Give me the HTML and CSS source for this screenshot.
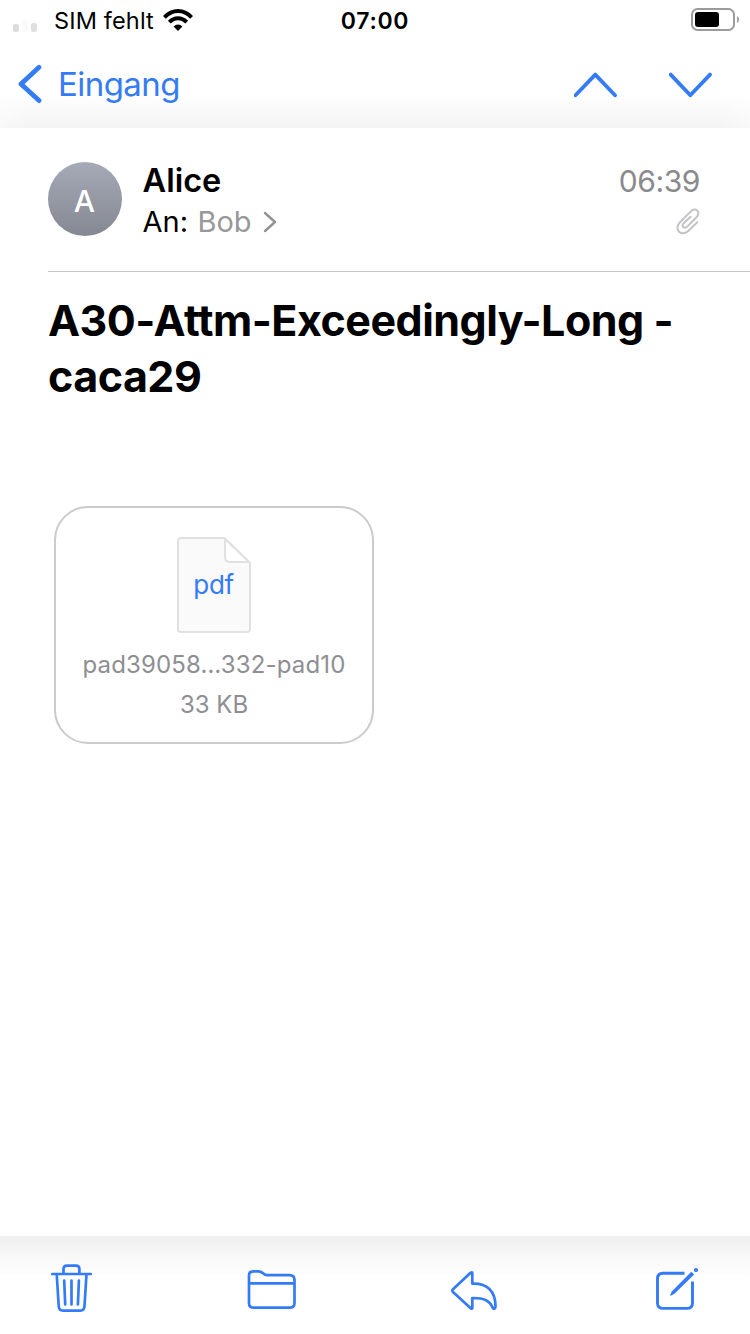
FILE: index.html
```html
<!DOCTYPE html>
<html lang="de">
<head>
<meta charset="utf-8">
<title>Eingang</title>
<link rel="stylesheet" href="styles.css">
</head>
<body>
<div class="screen">
  <header class="top">
    <div class="status">
      <div class="status-left">
        <svg class="signal" width="26" height="12" viewBox="0 0 26 12"><rect x="0" y="4" width="6" height="8" rx="2" fill="#dcdcdd"/><rect x="9" y="0" width="6" height="12" rx="2" fill="#fafafa"/><rect x="18" y="3" width="6" height="9" rx="2" fill="#dfdfe0"/></svg>
        <span class="carrier">SIM fehlt</span>
        <svg class="wifi" width="30" height="22" viewBox="0 0 30 22"><g fill="none" stroke="#000" stroke-width="3.9"><path d="M1.4 8.3Q7.4 2 15 2T28.6 8.3"/><path d="M6.3 13.2Q10.1 9.2 15 9.2T23.7 13.2"/></g><path d="M15 22l-4.4-4.5Q12.4 15.6 15 15.6T19.4 17.5z"/></svg>
      </div>
      <span class="clock">07:00</span>
      <svg class="battery" width="49" height="24" viewBox="0 0 49 24"><rect x="1" y="1" width="42" height="21" rx="5.5" fill="none" stroke="#9b9b9b" stroke-width="2"/><rect x="4" y="4" width="24" height="15" rx="3" fill="#000"/><path d="M46 8q2 1.200 2 3.500t-2 3.500z" fill="#9b9b9b"/></svg>
    </div>
    <nav class="nav">
      <a class="back"><svg width="26" height="40" viewBox="0 0 26 40"><path d="M22 3.300L4 20 22 36.600" fill="none" stroke="#347bf7" stroke-width="4.800" stroke-linecap="round" stroke-linejoin="round"/></svg><span class="back-label">Eingang</span></a>
      <div class="pager">
        <svg width="44" height="26" viewBox="0 0 44 26"><path d="M1.500 23.300L21.300 2.600 41 23.300" class="line pager-line"/></svg>
        <svg width="44" height="26" viewBox="0 0 44 26"><path d="M1.700 2.600L21.300 23.300 41 2.600" class="line pager-line"/></svg>
      </div>
    </nav>
  </header>
  <main class="mail">
    <section class="head">
      <div class="avatar"><span>A</span></div>
      <div class="people">
        <div class="sender">Alice</div>
        <div class="to"><span class="to-label">An:</span><span class="to-name">Bob</span><svg width="14" height="22" viewBox="0 0 14 22"><path d="M2 2L12 11 2 20" fill="none" stroke="#929294" stroke-width="2.400" stroke-linecap="round" stroke-linejoin="round"/></svg></div>
      </div>
      <div class="meta">
        <div class="time">06:39</div>
        <svg class="clip" width="24" height="27" viewBox="0 0 24 27"><path d="M21.300 14.200L12.500 22.800C9.500 25.800 5.500 26.200 3 23.700S1 17.300 4 14.300L14.600 3.600C16.800 1.400 19.500.8 21.300 2.600S22.700 7 20.500 9.200L11.700 18.100C10.200 19.600 8.500 20.300 7.200 19.100S6.600 16.300 8.100 14.800L14.600 8.700" fill="none" stroke="#c3c3c5" stroke-width="2" stroke-linecap="round"/></svg>
      </div>
    </section>
    <h1 class="subject">A30-Attm-Exceedingly-Long -<br>caca29</h1>
    <section class="attachment">
      <div class="file">
        <svg class="sheet" width="74" height="96" viewBox="0 0 74 96"><path d="M4 1H47.500L73 26V92a3 3 0 0 1-3 3H4a3 3 0 0 1-3-3V4a3 3 0 0 1 3-3z" fill="#fafafa" stroke="#e1e1e1" stroke-width="2"/><path d="M48 2V20q0 5 5 5H72z" fill="#fff" stroke="#e1e1e1" stroke-width="2" stroke-linejoin="round"/></svg>
        <span class="ext">pdf</span>
      </div>
      <div class="file-name">pad39058…332-pad10</div>
      <div class="file-size">33 KB</div>
    </section>
  </main>
  <footer class="tools">
    <svg width="42" height="50" viewBox="0 0 42 50"><path class="line" d="M1.300 11H39.800M12.500 10V6Q12.500 2.600 15.900 2.600H25Q28.400 2.600 28.400 6V10M5.700 11L7.700 43Q8 47.600 12 47.600H29.300Q33.200 47.600 33.500 43L35.500 11M13.200 17.500L14.200 41.500M20.500 17.500V41.500M27.900 17.500L26.900 41.500"/></svg>
    <svg width="50" height="50" viewBox="0 0 50 50"><path class="line" d="M2 12.500Q2 8.300 6.500 8.300H11.500Q14 8.300 16 10.200Q18 12.200 20.500 12.200H42.500Q47.500 12.200 47.500 16.900V40Q47.500 44.700 42.500 44.700H6.700Q2 44.700 2 40zM2 20.300H47.500"/></svg>
    <svg width="50" height="50" viewBox="0 0 50 50"><path class="line" d="M22.300 10V20.600C37 20 45.500 28 45.500 43.500C45.500 46.300 43.500 46.400 42.700 44.600C39.500 37.300 33.500 34.800 22.300 35V44.800Q22.300 46.500 20.700 45.200L3 29Q1.500 27.600 3 26.200L20.300 10Q22.300 8.500 22.300 10z"/></svg>
    <svg width="46" height="50" viewBox="0 0 46 50"><path class="line compose-line" d="M30.500 10.300H9Q3.500 10.300 3.500 15.800V39.900Q3.500 45.400 9 45.400H33Q38.500 45.400 38.500 39.900V18.500"/><path d="M37.300 8.800L40.200 11.600 20.500 30.800 16.800 32.700Q16 32.900 16.200 32.100L18 28.300z" fill="#347bf7"/><circle cx="42" cy="7.100" r="2.100" fill="#347bf7"/></svg>
  </footer>
</div>
</body>
</html>
```
FILE: styles.css
```css
* { box-sizing: border-box; }
body { margin: 0; background: #fff; font-family: Inter, "Liberation Sans", sans-serif; color: #000; }
svg { display: block; flex: none; }
.screen { width: 750px; height: 1334px; display: flex; flex-direction: column; overflow: hidden; white-space: nowrap; }
.line { fill: none; stroke: #347bf7; stroke-width: 2.700; stroke-linecap: round; stroke-linejoin: round; }
.pager-line { stroke-width: 3.800; }
.compose-line { stroke-width: 2.900; stroke-linecap: butt; }

.top { height: 128px; background: linear-gradient(90deg, rgba(255,255,255,.4), rgba(255,255,255,0) 28px, rgba(255,255,255,0) 722px, rgba(255,255,255,.4)), linear-gradient(#fff 74%, #fcfcfc 80%, #f4f4f4); }
.status { height: 40px; display: grid; grid-template: 40px / 1fr auto 1fr; align-items: center; padding: 0 10px 0 13px; }
.status-left { display: flex; align-items: center; height: 40px; }
.signal { margin: 12px 15px 0 0; }
.carrier { font-size: 23.500px; line-height: 40px; padding-top: 1px; width: 109px; letter-spacing: 0.150px; }
.clock { font-size: 23px; font-weight: 600; line-height: 40px; letter-spacing: 0.700px; padding-top: 2px; margin-right: 3px; }
.battery { justify-self: end; }
.nav { height: 88px; display: flex; justify-content: space-between; padding: 24px 37px 24px 17px; }
.back { display: flex; align-items: center; height: 40px; color: #347bf7; }
.back-label { margin-left: 15px; font-size: 33px; line-height: 40px; letter-spacing: -0.550px; }
.pager { display: flex; gap: 51px; align-items: center; height: 42px; }

.mail { flex: 1; padding-left: 48px; background: #fff; }
.head { height: 144px; border-bottom: 1px solid #c6c6c8; display: flex; padding: 34px 50px 0 0; }
.avatar { width: 74px; height: 74px; border-radius: 50%; background: linear-gradient(#a5aab7, #858892); color: #fff; display: flex; justify-content: center; font-size: 30px; font-weight: 500; line-height: 78px; }
.avatar span { padding-right: 1px; }
.people { margin-left: 20.500px; flex: 1; }
.sender { font-size: 32.500px; line-height: 38px; font-weight: 600; }
.to { display: flex; align-items: center; font-size: 29px; line-height: 44px; }
.to-name { color: #98989a; margin-left: 9.500px; }
.to svg { margin-left: 11px; }
.meta { display: flex; flex-direction: column; align-items: flex-end; color: #8a8a8e; }
.time { font-size: 30px; line-height: 39px; letter-spacing: -0.400px; }
.clip { margin-top: 7px; }
.subject { margin: 20px 0 0; font-size: 43px; line-height: 56px; font-weight: 700; letter-spacing: -0.500px; font-feature-settings: "calt" 0, "liga" 0; }
.attachment { width: 320px; height: 238px; margin: 102px 0 0 6px; border: 2px solid #cbcbcb; border-radius: 34px; padding-top: 29px; display: flex; flex-direction: column; align-items: center; color: #8e8e93; font-size: 24px; }
.file { display: grid; width: 74px; height: 96px; }
.sheet, .ext { grid-area: 1 / 1; }
.ext { color: #347bf7; font-size: 26px; line-height: 95px; text-align: center; letter-spacing: -0.400px; padding-right: 1px; }
.file-name { margin-top: 12px; line-height: 40px; letter-spacing: 0.150px; }
.file-size { line-height: 40px; }
.tools { height: 98px; display: flex; justify-content: space-between; align-items: flex-start; padding: 27px 50px 0 51px; background: linear-gradient(#eee, #f4f4f4 13%, #fafafa 26%, #fdfdfd 39%, #fff 41%); }
```
